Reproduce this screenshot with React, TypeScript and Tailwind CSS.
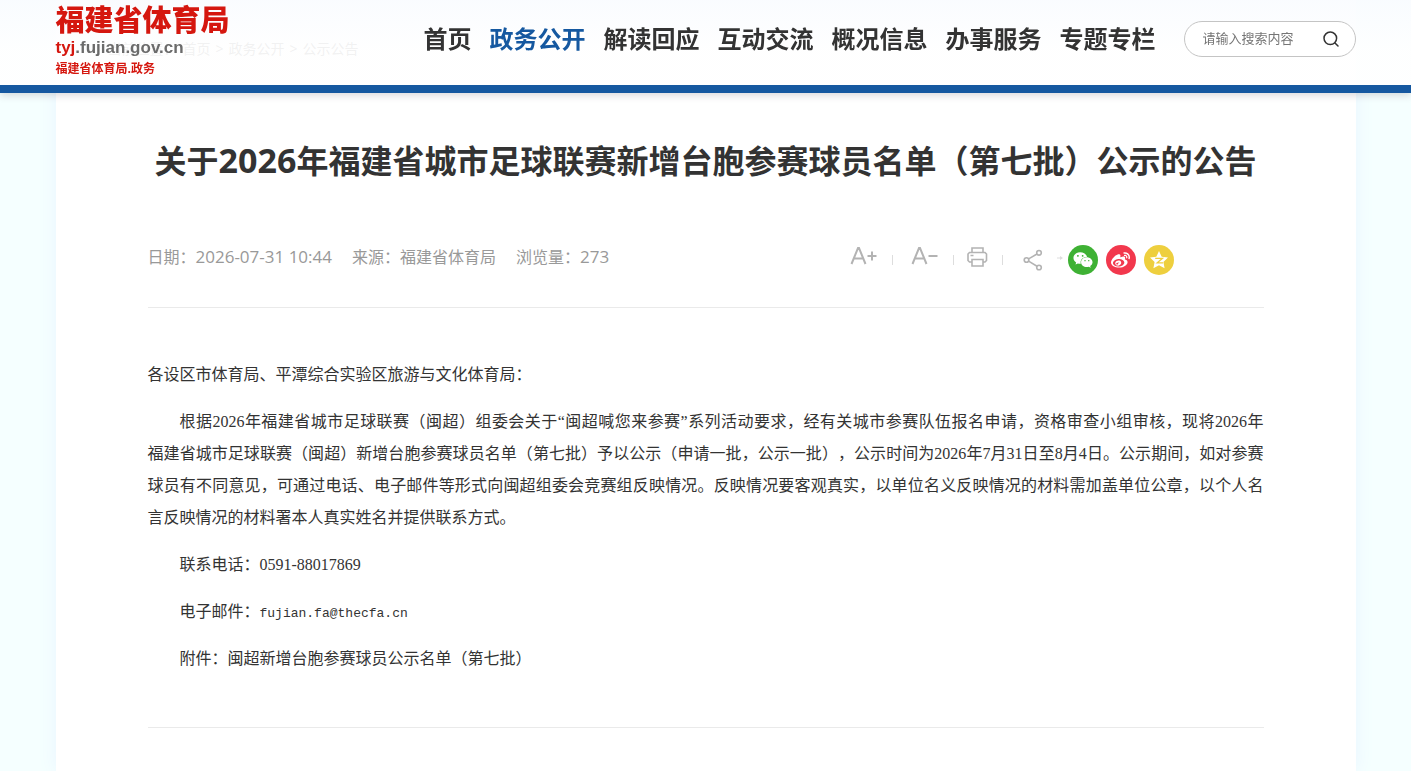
import { FaWeixin, FaWeibo } from "react-icons/fa";

const navItems = ["首页", "政务公开", "解读回应", "互动交流", "概况信息", "办事服务", "专题专栏"];

function Header() {
  return (
    <header className="fixed inset-x-0 top-0 z-10 border-b-8 border-[#1558a0] bg-linear-to-b from-[#fafcff]/90 to-white/90 to-60% shadow-[0_2px_8px_rgba(60,50,60,0.2)]">
      <div className="mx-auto flex h-[85px] max-w-[1300px] items-start justify-between">
        <a href="#" className="flex flex-col whitespace-nowrap text-[#d5170f]">
          <span className="mt-1 text-[29px] leading-8 font-black">福建省体育局</span>
          <span className="font-['Liberation_Sans',sans-serif] text-[17px] leading-6 font-bold">
            tyj<span className="text-[#6b6b6b]">.fujian.gov.cn</span>
          </span>
          <span className="text-xs leading-[18px] font-bold">福建省体育局.政务</span>
        </a>
        <div className="flex items-start gap-7">
          <nav className="flex gap-[18px] pt-[21px] text-2xl leading-9 font-bold whitespace-nowrap text-[#333]">
            {navItems.map((item) => (
              <a key={item} href="#" className={item === "政务公开" ? "text-[#1558a0]" : ""}>
                {item}
              </a>
            ))}
          </nav>
          <form className="mt-[21px] flex h-9 w-[172px] items-center rounded-full border border-[#c4c4c4] bg-white pr-4 pl-[18px]">
            <input
              type="text"
              aria-label="搜索"
              placeholder="请输入搜索内容"
              className="w-full min-w-0 bg-transparent pb-0.5 text-[13px] leading-5 outline-none placeholder:text-[#757575]"
            />
            <button type="button" aria-label="搜索" className="shrink-0">
              <svg viewBox="0 0 16 16" className="h-4 w-4" fill="none" stroke="#333" strokeWidth="1.5" strokeLinecap="round">
                <circle cx="7.3" cy="7.3" r="6.3" />
                <path d="M12 12l3 3" />
              </svg>
            </button>
          </form>
        </div>
      </div>
    </header>
  );
}

function Toolbar() {
  return (
    <div className="flex items-center text-[#b3b3b3]">
      <button type="button" aria-label="放大字号" className="mb-2">
        <svg viewBox="0 0 28 20" className="h-5 w-7" fill="none" stroke="currentColor" strokeWidth="2">
          <path d="M1.5 18L8 2h1l6.500 16M4 12.500h9M17.500 10h9M22 5.500v9" />
        </svg>
      </button>
      <i className="ml-3.5 h-2.5 w-px bg-[#ddd]" />
      <button type="button" aria-label="缩小字号" className="mb-2 ml-[18px]">
        <svg viewBox="0 0 28 20" className="h-5 w-7" fill="none" stroke="currentColor" strokeWidth="2">
          <path d="M1.500 18L8 2h1l6.500 16M4 12.500h9M17.500 10h9" />
        </svg>
      </button>
      <i className="ml-3.5 h-2.5 w-px bg-[#ddd]" />
      <button type="button" aria-label="打印" className="mb-1.5 ml-3">
        <svg viewBox="0 0 22 22" className="h-[22px] w-[22px]" fill="none" stroke="currentColor" strokeWidth="1.6">
          <path d="M6 6V2h11v4M6 16H3.500L2 14.500V8l1.500-1.500h15.500L20.500 8v6.500L19 16h-2M6 13.500h11V20H6zM4.500 9.500h3" />
        </svg>
      </button>
      <i className="ml-3.5 h-2.5 w-px bg-[#ddd]" />
      <button type="button" aria-label="分享" className="ml-5">
        <svg viewBox="0 0 20 22" className="h-[22px] w-5" fill="none" stroke="currentColor" strokeWidth="1.6">
          <circle cx="3.500" cy="11" r="2.300" />
          <circle cx="16" cy="3.800" r="2.300" />
          <circle cx="16" cy="18.500" r="2.300" />
          <path d="M5.600 9.900L14 5M5.600 12.100L14 17.200" />
        </svg>
      </button>
      <svg viewBox="0 0 6 4" className="mb-1 ml-3.5 h-1 w-1.5" fill="#ddd">
        <path d="M0 1.500h3V0l3 2-3 2V2.500H0z" />
      </svg>
      <div className="ml-[5px] flex gap-2 text-white">
        <a href="#" aria-label="微信" className="grid size-[30px] place-items-center rounded-full bg-[#3eb134]">
          <FaWeixin size={20} />
        </a>
        <a href="#" aria-label="微博" className="grid size-[30px] place-items-center rounded-full bg-[#f2384d]">
          <FaWeibo size={19} />
        </a>
        <a href="#" aria-label="QQ空间" className="grid size-[30px] place-items-center rounded-full bg-[#eecf3e]">
          <svg viewBox="0 0 20 20" className="size-5" fill="currentColor">
            <path d="M10 1l2.700 5.800 6.300.8-4.600 4.400 1.200 6.300L10 15.200l-5.600 3.100L5.600 12 1 7.600l6.300-.8z" />
            <path d="M6.200 8.300h7.300l-5.300 4.500h5.800" fill="none" stroke="#eecf3e" strokeWidth="1.300" />
          </svg>
        </a>
      </div>
    </div>
  );
}

export default function App() {
  return (
    <div className="min-h-screen bg-[#f5ffff] font-['Open_Sans','Noto_Sans_CJK_SC',sans-serif] text-[#333]">
      <Header />
      <main className="mx-auto min-h-screen max-w-[1300px] bg-white px-[92px] shadow-[0_0_18px_#e9f4ff]">
        <div className="-mx-[92px] flex h-[98px] items-center gap-[5px] pl-[52px] text-sm whitespace-nowrap text-[#777]">
          <span>当前位置：</span>
          <a href="#">首页</a>
          <span>&gt;</span>
          <a href="#">政务公开</a>
          <span>&gt;</span>
          <a href="#">公示公告</a>
        </div>
        <h1 className="pt-[38px] text-center text-[32px] leading-[48px] font-bold">
          关于<span className="text-[34px]">2026</span>年福建省城市足球联赛新增台胞参赛球员名单（第七批）公示的公告
        </h1>
        <div className="mt-[49px] flex h-[74px] items-start justify-between border-b border-[#eaeaea] pt-[11px] pr-[90px]">
          <div className="flex gap-5 text-base leading-6 whitespace-nowrap text-[#999]">
            <span>日期：<span className="text-[17px]">2026-07-31 10:44</span></span>
            <span>来源：福建省体育局</span>
            <span>浏览量：<span className="text-[17px]">273</span></span>
          </div>
          <Toolbar />
        </div>
        <article className="flex flex-col gap-[15px] border-b border-[#eaeaea] pt-[51px] pb-[52px] text-justify font-['Liberation_Serif','Noto_Sans_CJK_SC',serif] text-base leading-8 [text-spacing-trim:space-all]">
          <p>各设区市体育局、平潭综合实验区旅游与文化体育局：</p>
          <p className="indent-8">
            根据2026年福建省城市足球联赛（闽超）组委会关于“闽超喊您来参赛”系列活动要求，经有关城市参赛队伍报名申请，资格审查小组审核，现将2026年<span className="whitespace-nowrap">福建</span>省城市足球联赛（闽超）新增台胞参赛球员名单（第七批）予以公示（申请一批，公示一批），公示时间为2026年7月31日至8月4日。公示期间，如对参赛<span className="whitespace-nowrap">球员</span>有不同意见，可通过电话、电子邮件等形式向闽超组委会竞赛组反映情况。反映情况要客观真实，以单位名义反映情况的材料需加盖单位公章，以个人名<span className="whitespace-nowrap">言反</span>映情况的材料署本人真实姓名并提供联系方式。
          </p>
          <p className="indent-8">联系电话：0591-88017869</p>
          <p className="indent-8">
            电子邮件：<span className="font-['Liberation_Mono',monospace] text-[13px] leading-none">fujian.fa@thecfa.cn</span>
          </p>
          <p className="indent-8">附件：闽超新增台胞参赛球员公示名单（第七批）</p>
        </article>
      </main>
    </div>
  );
}
